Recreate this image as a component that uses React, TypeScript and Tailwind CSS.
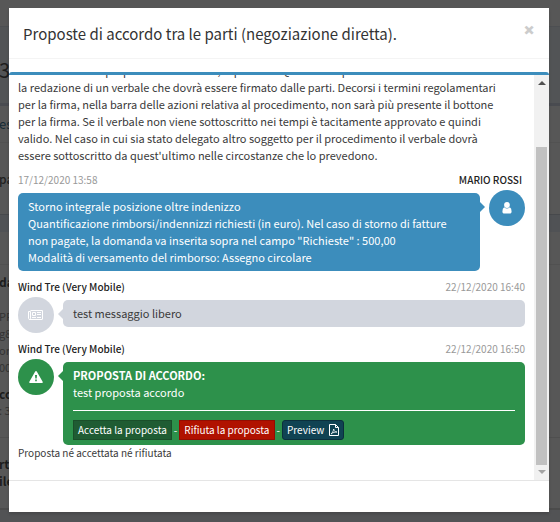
import React from "react";

const font = "font-['Noto_Sans_CJK_SC',sans-serif]";

type Band = { text?: string; box: string; type?: string };

const bands: Band[] = [
  { box: "h-[26px] bg-[#575757]" },
  { box: "h-[77px] border-t border-[#4d4f52] bg-[#525456]", text: "3(", type: "text-[20px] pt-[10px] text-[#1d1d1d]" },
  { box: "h-[39px] border-t-3 border-[#494b50] bg-[#575757]", text: "es", type: "text-[13px] text-[#142a35]" },
  { box: "h-[72px] border-t border-[#525252] bg-[#575757]", text: "pa", type: "text-[12px] font-medium text-[#222]" },
  { box: "h-[18px] border-t border-[#47494c] bg-[#505255]" },
  { box: "h-[32px] bg-[#575757]" },
  { box: "h-[34px] border-t border-[#515151] bg-[#575757]", text: "da", type: "text-[12px] font-bold text-[#1c1c1c]" },
  { box: "h-[10px] bg-[#575757]" },
  { box: "h-[17px] bg-[#575757]", text: "PP", type: "text-[11px] text-[#333]" },
  { box: "h-[17px] bg-[#575757]", text: "g8", type: "text-[11px] text-[#333]" },
  { box: "h-[17px] bg-[#575757]", text: "on", type: "text-[11px] text-[#333]" },
  { box: "h-[17px] bg-[#575757]", text: "00", type: "text-[11px] text-[#333]" },
  { box: "h-[9px] bg-[#575757]" },
  { box: "h-[17px] bg-[#575757]", text: "co", type: "text-[12px] font-bold text-[#1c1c1c]" },
  { box: "h-[17px] bg-[#575757]", text: ": 3", type: "text-[11px] text-[#333]" },
  { box: "h-[18px] bg-[#575757]" },
  { box: "h-[18px] border-t border-[#4f4f4f] bg-[#575757]" },
  { box: "h-[17px] bg-[#575757]", text: "rt", type: "text-[12px] font-bold text-[#1c1c1c]" },
  { box: "h-[17px] bg-[#575757]", text: "ile", type: "text-[12px] font-bold text-[#1c1c1c]" },
  { box: "h-[19px] bg-[#575757]" },
  { box: "h-[14px] border-t-2 border-[#4b4b4b] bg-[#525355]" },
];

function Backdrop() {
  return (
    <div aria-hidden="true" className="absolute inset-0 overflow-hidden bg-[#525355]">
      {bands.map((band, i) => (
        <div key={i} className={"flex " + band.box}>
          {band.text && (
            <span className={"-ml-px flex shrink-0 items-center whitespace-nowrap " + band.type}>
              {band.text}
            </span>
          )}
        </div>
      ))}
    </div>
  );
}

function Info({ left, right, own }: { left: string; right: string; own?: boolean }) {
  const name = "font-medium text-[#222]";
  const time = "text-[#999]";
  return (
    <div className="flex justify-between text-[10px] leading-[17px]">
      <span className={own ? time : name}>{left}</span>
      <span className={own ? name + " pr-[3px]" : time}>{right}</span>
    </div>
  );
}

function Avatar({ tone, children }: { tone: string; children: React.ReactNode }) {
  return (
    <div className={"mt-[2px] flex size-9 shrink-0 items-center justify-center rounded-full text-white " + tone}>
      {children}
    </div>
  );
}

function UserIcon() {
  return (
    <svg width="10" height="12" viewBox="0 0 10 12" fill="currentColor" aria-hidden="true">
      <circle cx="5" cy="3" r="2.9" />
      <path d="M2.200 5.200Q.4 6 .4 9.500c0 1.400.8 2 1.800 2h5.600c1 0 1.800-.6 1.800-2Q9.600 6 7.800 5.200 5 7.800 2.200 5.200z" />
    </svg>
  );
}

function NewsIcon() {
  return (
    <svg width="16" height="12" viewBox="0 0 16 12" fill="none" stroke="currentColor" aria-hidden="true">
      <path d="M2.500 1.500h12v8.500q0 .500-.500.500h-12Q.500 10.500.500 9.500v-7h2v7q0 1-1 1" />
      <path d="M4.500 3.500h3v3h-3zM9 3.500h4M9 5.500h4M4 8.500h4M9 8.500h4" />
    </svg>
  );
}

function WarningIcon() {
  return (
    <svg width="14" height="12" viewBox="0 0 14 12" fill="currentColor" aria-hidden="true">
      <path fillRule="evenodd" d="M6.200.4Q7-.300 7.800.4L13.800 11q.1 1-.8 1H1Q.1 12 .2 11zM6 4l.3 3.500h1.400L8 4zM6.200 8.500v1.700h1.600V8.500z" />
    </svg>
  );
}

function PdfIcon() {
  return (
    <svg width="10" height="12" viewBox="0 0 10 12" fill="none" stroke="currentColor" aria-hidden="true">
      <path d="M.5.500h6l3 3v8h-9zM6.500.500v3h3" />
      <path strokeWidth=".8" d="M2 10c1-.5 2.500-3 2.700-5 .3 2 1.300 3 3.300 3-2 0-4 .3-6 2z" />
    </svg>
  );
}

export default function App() {
  return (
    <div className={"relative min-h-screen px-[9px] pt-2 pb-[10px] text-[#3a3a3a] " + font} lang="it">
      <Backdrop />
      <div role="dialog" aria-labelledby="title" className="relative mr-[2px] bg-white shadow-[0_2px_3px_rgba(0,0,0,0.15)]">
        <header className="flex h-[51px] items-start justify-between border-b border-[#f4f4f4] px-[14px]">
          <h4 id="title" className="pt-[13px] text-[15px] leading-[25px] text-[#333]">
            Proposte di accordo tra le parti (negoziazione diretta).
          </h4>
          <button type="button" aria-label="Chiudi" className="pt-[11px] font-['Open_Sans',sans-serif] text-[20px] leading-[21px] font-extrabold text-[#ccc]">
            ×
          </button>
        </header>

        <section className="mt-[13px] rounded-[3px] border-t-3 border-[#3c8dbc]">
          <div className="flex h-[405px]">
            <div className="flex h-full min-w-0 flex-1 flex-col justify-end overflow-hidden px-[9px] pb-5 text-[11px] leading-[17px]">
              <p className="shrink-0">
                Nel caso in cui la proposta sia accettata, si procede. Questa comporterà
                <br />
                la redazione di un verbale che dovrà essere firmato dalle parti. Decorsi i termini regolamentari
                <br />
                per la firma, nella barra delle azioni relativa al procedimento, non sarà più presente il bottone
                <br />
                per la firma. Se il verbale non viene sottoscritto nei tempi è tacitamente approvato e quindi
                <br />
                valido. Nel caso in cui sia stato delegato altro soggetto per il procedimento il verbale dovrà
                <br />
                essere sottoscritto da quest'ultimo nelle circostanze che lo prevedono.
              </p>

              <article className="mt-[7px] shrink-0">
                <Info own left="17/12/2020 13:58" right="MARIO ROSSI" />
                <div className="flex items-start gap-[9px]">
                  <div className="relative mt-[5px] flex-1 rounded-[5px] bg-[#3c8dbc] px-[10px] py-[5px] text-white">
                    <span className="absolute top-[9px] left-full border-[5px] border-transparent border-l-[#3c8dbc]" />
                    Storno integrale posizione oltre indenizzo
                    <br />
                    Quantificazione rimborsi/indennizzi richiesti (in euro). Nel caso di storno di fatture
                    <br />
                    non pagate, la domanda va inserita sopra nel campo "Richieste" : 500,00
                    <br />
                    Modalità di versamento del rimborso: Assegno circolare
                  </div>
                  <Avatar tone="bg-[#3c8dbc]">
                    <UserIcon />
                  </Avatar>
                </div>
              </article>

              <article className="mt-[7px] shrink-0">
                <Info left="Wind Tre (Very Mobile)" right="22/12/2020 16:40" />
                <div className="flex items-start gap-[9px]">
                  <Avatar tone="bg-[#d2d6de]">
                    <NewsIcon />
                  </Avatar>
                  <div className="relative mt-[5px] flex-1 rounded-[5px] bg-[#d2d6de] px-[10px] py-[5px]">
                    <span className="absolute top-[9px] right-full border-[5px] border-transparent border-r-[#d2d6de]" />
                    test messaggio libero
                  </div>
                </div>
              </article>

              <article className="mt-[7px] shrink-0">
                <Info left="Wind Tre (Very Mobile)" right="22/12/2020 16:50" />
                <div className="flex items-start gap-[9px]">
                  <Avatar tone="bg-[#2d914b]">
                    <WarningIcon />
                  </Avatar>
                  <div className="relative mt-[5px] flex-1 rounded-[5px] bg-[#2d914b] px-[10px] py-[5px] text-white">
                    <span className="absolute top-[9px] right-full border-[5px] border-transparent border-r-[#2d914b]" />
                    <strong className="block font-bold">PROPOSTA DI ACCORDO:</strong>
                    test proposta accordo
                    <hr className="mt-[9px] mb-[9px] border-t border-white" />
                    <div className="flex items-center gap-[2px] text-[10px] leading-[18px]">
                      <button type="button" className="border border-[#1a4f2a] bg-[#1f5c33] px-1">
                        Accetta la proposta
                      </button>
                      -
                      <button type="button" className="border border-[#930d01] bg-[#b01200] px-1">
                        Rifiuta la proposta
                      </button>
                      -
                      <button type="button" className="flex items-center gap-[5px] rounded-[3px] border border-[#0b2f3c] bg-[#104353] px-1">
                        Preview <PdfIcon />
                      </button>
                    </div>
                  </div>
                </div>
                <p className="text-[10px] leading-[15px]">Proposta né accettata né rifiutata</p>
              </article>
            </div>

            <div aria-hidden="true" className="flex w-[15px] shrink-0 flex-col items-center bg-[#f1f1f1]">
              <span className="mt-[6px] border-x-[4px] border-b-[4px] border-x-transparent border-b-[#505050]" />
              <span className="mt-[62px] w-[11px] flex-1 bg-[#c1c1c1]" />
              <span className="mt-[5px] mb-[6px] border-x-[4px] border-t-[4px] border-x-transparent border-t-[#a3a3a3]" />
            </div>
          </div>
        </section>
        <footer className="h-[32px] border-t border-[#e5e5e5]" />
      </div>
    </div>
  );
}
